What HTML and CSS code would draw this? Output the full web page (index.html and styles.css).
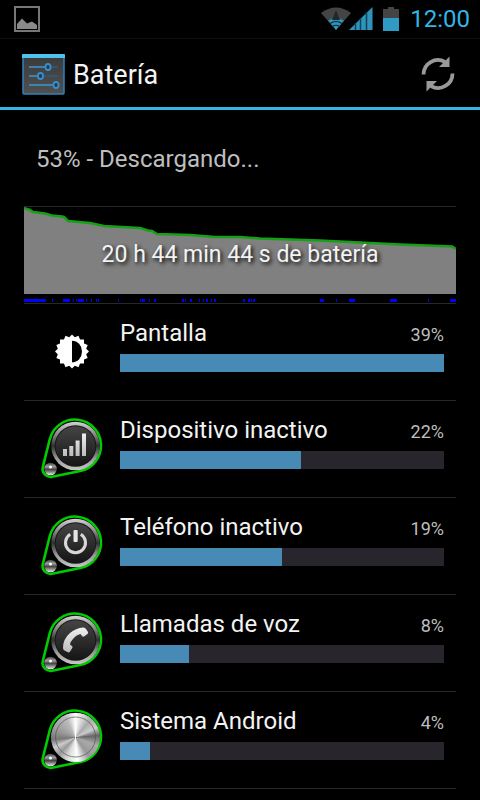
FILE: index.html
```html
<!DOCTYPE html>
<html lang="es">
<head>
    <meta charset="UTF-8">
    <meta name="viewport" content="width=device-width, initial-scale=1.0">
    <title>Batería</title>
    <link rel="stylesheet" href="styles.css">
</head>
<body>
    <!-- Formas compartidas por los iconos -->
    <svg class="defs" width="0" height="0" aria-hidden="true">
        <defs>
            <linearGradient id="ring" x1="0" y1="0" x2="0" y2="1">
                <stop offset="0" stop-color="#d2d2d2"/>
                <stop offset="0.25" stop-color="#8c8c8c"/>
                <stop offset="0.5" stop-color="#303030"/>
                <stop offset="0.75" stop-color="#999"/>
                <stop offset="1" stop-color="#c8c8c8"/>
            </linearGradient>
            <linearGradient id="disc" x1="0" y1="0" x2="0" y2="1">
                <stop offset="0" stop-color="#454545"/>
                <stop offset="1" stop-color="#151515"/>
            </linearGradient>
            <linearGradient id="ball" x1="0" y1="0" x2="0" y2="1">
                <stop offset="0" stop-color="#444"/>
                <stop offset="0.3" stop-color="#999"/>
                <stop offset="0.55" stop-color="#444"/>
                <stop offset="1" stop-color="#eee"/>
            </linearGradient>
            <linearGradient id="glyph" x1="0" y1="0" x2="0" y2="1">
                <stop offset="0" stop-color="#f0f0f0"/>
                <stop offset="1" stop-color="#bbb"/>
            </linearGradient>
            <linearGradient id="panel" x1="0" y1="0" x2="0" y2="1">
                <stop offset="0" stop-color="#3a3a3a"/>
                <stop offset="1" stop-color="#505050"/>
            </linearGradient>
            <symbol id="badge" viewBox="0 0 72 72">
                <path d="M6.8 55L13.8 27.1A26 26 0 1 1 44.3 59L16.1 64.8A8 8 0 0 1 6.8 55Z" fill="#000" stroke="#0c0" stroke-width="2.6"/>
                <circle cx="39.5" cy="34" r="24.3" fill="url(#ring)"/>
                <circle cx="39.5" cy="34" r="20.8" fill="#181818"/>
                <circle cx="39.5" cy="34" r="19.8" fill="url(#disc)"/>
                <circle cx="14.5" cy="57" r="6.3" fill="url(#ball)"/>
                <circle cx="14.5" cy="55" r="1.5" fill="#fff"/>
            </symbol>
        </defs>
    </svg>

    <div class="status-bar">
        <svg class="status-picture" width="26" height="26" viewBox="0 0 26 26" aria-hidden="true">
            <rect x="1" y="1" width="24" height="24" fill="none" stroke="#777" stroke-width="2"/>
            <path d="M3 23V18L8 12.5L13 17.5L18 15.5L23 19V23Z" fill="#8a8a8a"/>
        </svg>
        <div class="status-icons">
            <svg width="52" height="24" viewBox="0 0 52 24" aria-hidden="true">
                <path d="M0 6Q15 -5 30 6L15 23Z" fill="#444"/>
                <path d="M7 13.5Q15 8.500 23 13.5L15 23Z" fill="#2f93bb"/>
                <path d="M15 3L11 13H19Z" fill="#1c2a30"/>
                <path d="M9 16.5Q15 12.5 21 16.5M11.5 19.5Q15 17 18.5 19.5" fill="none" stroke="#123" stroke-width="1.2"/>
                <path d="M28 23L51.5 0V23Z" fill="#2f93bb"/>
                <path d="M34.5 16V23M39.5 11V23M45.5 5V23" stroke="#0e4257" stroke-width="1.5"/>
            </svg>
            <svg class="status-battery" width="16" height="24" viewBox="0 0 16 24" aria-hidden="true">
                <path d="M5 0H11V2H16V11H0V2H5Z" fill="#444"/>
                <rect y="11" width="16" height="13" fill="#2f9ac4"/>
            </svg>
            <span class="clock">12:00</span>
        </div>
    </div>

    <header class="action-bar">
        <svg width="44" height="44" viewBox="0 0 44 44" aria-hidden="true">
            <rect x="2" y="3" width="41" height="39" rx="1" fill="url(#panel)" stroke="#2d83c0" stroke-width="1.5"/>
            <path d="M1 3Q1 2 2 2H43Q44 2 44 3V6H1Z" fill="#4fc1ee"/>
            <path d="M8 15H24M8 24H17M8 33H32" stroke="#3a97dd" stroke-width="1.5"/>
            <path d="M30 15H37M23 24H37" stroke="#30597c" stroke-width="1.5"/>
            <g fill="#303840" stroke="#3190cf" stroke-width="1.8">
                <ellipse cx="27" cy="15" rx="2.6" ry="3"/>
                <ellipse cx="19.5" cy="24" rx="2.6" ry="3"/>
                <ellipse cx="35" cy="33" rx="2.6" ry="3"/>
            </g>
        </svg>
        <h1 class="title">Batería</h1>
        <button class="refresh" type="button" aria-label="Actualizar">
            <svg width="34" height="36" viewBox="0 0 34 36" aria-hidden="true">
                <g id="arrow">
                    <path d="M2.5 18.5A14.5 14.5 0 0 1 24 5.8" fill="none" stroke="#999" stroke-width="3.8"/>
                    <path d="M28.5 .5V11H18Z" fill="#999"/>
                </g>
                <use href="#arrow" transform="rotate(180 17 18)"/>
            </svg>
        </button>
    </header>

    <main class="content">
        <p class="summary">53% - Descargando...</p>

        <div class="history">
            <svg class="history-chart" viewBox="0 0 432 96" preserveAspectRatio="none" aria-hidden="true">
                <path d="M0 1L6 3L9 5L21 6.5L28 8.5L38 9.5L40 10L44 14L66 16L80 19L116 21L124 23.5L128 24L133 27L166 28L191 30L216 30L236 31.5L296 33.5L336 35.5L376 37.5L416 39L428 39.5L432 42V87H0Z" fill="#808080"/>
                <path d="M0 1L6 3L9 5L21 6.5L28 8.5L38 9.5L40 10L44 14L66 16L80 19L116 21L124 23.5L128 24L133 27L166 28L191 30L216 30L236 31.5L296 33.5L336 35.5L376 37.5L416 39L428 39.5L432 42" fill="none" stroke="#16a016" stroke-width="2.5"/>
                <!-- Momentos con la pantalla encendida -->
                <path d="M0 92h22v3H0zM28 92h1v3h-1zM39 92h7v3h-7zM49 92h1v3h-1zM52 92h1v3h-1zM54 92h6v3h-6zM62 92h1v3h-1zM67 92h1v3h-1zM72 92h1v3h-1zM74 92h1v3h-1zM94 92h1v3h-1zM116 92h1v3h-1zM118 92h3v3h-3zM125 92h1v3h-1zM130 92h2v3h-2zM158 92h2v3h-2zM161 92h1v3h-1zM166 92h2v3h-2zM175 92h1v3h-1zM179 92h1v3h-1zM182 92h2v3h-2zM187 92h1v3h-1zM190 92h2v3h-2zM219 92h2v3h-2zM224 92h2v3h-2zM227 92h1v3h-1zM229 92h2v3h-2zM296 92h4v3h-4zM312 92h1v3h-1zM325 92h6v3h-6zM366 92h7v3h-7zM404 92h1v3h-1zM426 92h6v3h-6z" fill="#00f" shape-rendering="crispEdges"/>
            </svg>
            <span class="history-label">20 h 44 min 44 s de batería</span>
        </div>

        <ul class="usage">
            <li class="row">
                <svg class="icon" viewBox="0 0 72 72" aria-hidden="true">
                    <!-- Cuatro cuadrados girados forman las 16 puntas -->
                    <g fill="#fff">
                        <rect x="24" y="24.5" width="24" height="24"/>
                        <rect x="24" y="24.5" width="24" height="24" transform="rotate(22.5 36 36.5)"/>
                        <rect x="24" y="24.5" width="24" height="24" transform="rotate(45 36 36.5)"/>
                        <rect x="24" y="24.5" width="24" height="24" transform="rotate(67.5 36 36.5)"/>
                    </g>
                    <path d="M36 25.7A10 10.8 0 0 1 36 47.3Z" fill="#000"/>
                </svg>
                <div class="detail">
                    <div class="heading"><span class="name">Pantalla</span><span class="percent">39%</span></div>
                    <div class="track"><div class="fill" style="width: 100%"></div></div>
                </div>
            </li>
            <li class="row">
                <svg class="icon" viewBox="0 0 72 72" aria-hidden="true">
                    <use href="#badge"/>
                    <path d="M27 37h4v7h-4zM33.3 34h4v10h-4zM39.6 28.5h4V44h-4zM46 21.5h4V44h-4z" fill="url(#glyph)"/>
                </svg>
                <div class="detail">
                    <div class="heading"><span class="name">Dispositivo inactivo</span><span class="percent">22%</span></div>
                    <div class="track"><div class="fill" style="width: 56%"></div></div>
                </div>
            </li>
            <li class="row">
                <svg class="icon" viewBox="0 0 72 72" aria-hidden="true">
                    <use href="#badge"/>
                    <path d="M34.2 25.2A10 10 0 1 0 44.8 25.2" fill="none" stroke="#d8d8d8" stroke-width="3"/>
                    <rect x="37.5" y="21" width="4.2" height="12" rx="1" fill="#e4e4e4"/>
                </svg>
                <div class="detail">
                    <div class="heading"><span class="name">Teléfono inactivo</span><span class="percent">19%</span></div>
                    <div class="track"><div class="fill" style="width: 50%"></div></div>
                </div>
            </li>
            <li class="row">
                <svg class="icon" viewBox="0 0 72 72" aria-hidden="true">
                    <use href="#badge"/>
                    <path d="M27 42Q27 33 34 27Q40 22 47 21.5Q49 21.3 50 23L52 26Q52.5 27 51.5 28L48 30.5Q47 31 46 30L44.5 28Q40 29 37 33Q34 36 34 38.5L36 40Q37 40.8 36.3 42L34 45.5Q33 47 31.5 46L28.5 44.5Q27 43.5 27 42Z" fill="url(#glyph)"/>
                </svg>
                <div class="detail">
                    <div class="heading"><span class="name">Llamadas de voz</span><span class="percent">8%</span></div>
                    <div class="track"><div class="fill" style="width: 21.3%"></div></div>
                </div>
            </li>
            <li class="row">
                <svg class="icon" viewBox="0 0 72 72" aria-hidden="true">
                    <use href="#badge"/>
                    <foreignObject x="15" y="10" width="49" height="49"><div class="metal"></div></foreignObject>
                    <circle cx="39.5" cy="34" r="20" fill="none" stroke="#555" stroke-width="1" stroke-opacity="0.7"/>
                </svg>
                <div class="detail">
                    <div class="heading"><span class="name">Sistema Android</span><span class="percent">4%</span></div>
                    <div class="track"><div class="fill" style="width: 9.3%"></div></div>
                </div>
            </li>
        </ul>
    </main>
</body>
</html>
```
FILE: styles.css
```css
body {
    font-family: Roboto, sans-serif;
    background-color: #000;
    color: #f3f3f3;
    margin: 0;
}
.defs {
    position: absolute;
}
.status-bar {
    display: flex;
    justify-content: space-between;
    align-items: center;
    height: 38px;
    padding: 0 10px 0 14px;
    border-bottom: 1px solid #0d0d0d;
}
.status-icons {
    display: flex;
    align-items: center;
}
.status-battery {
    margin: 0 11px 0 10px;
}
.clock {
    font-size: 24px;
    line-height: 40px;
    color: #33b5e5;
}
.action-bar {
    display: flex;
    align-items: center;
    height: 66px;
    padding: 2px 25px 0 21px;
    border-bottom: 3px solid #33b5e5;
}
.title {
    flex: 1;
    margin: 0 0 0 8px;
    padding-top: 2px;
    font-size: 27px;
    font-weight: 400;
}
.refresh {
    display: flex;
    padding: 0;
    border: none;
    background: none;
    cursor: pointer;
}
.content {
    padding: 0 24px;
}
.summary {
    margin: 0;
    padding: 2px 12px 0;
    font-size: 24px;
    line-height: 94px;
    color: #bebebe;
    border-bottom: 1px solid #282828;
}
.history {
    position: relative;
    height: 96px;
    border-bottom: 1px solid #282828;
}
.history-chart {
    display: block;
    width: 100%;
    height: 96px;
}
/* El texto va centrado encima de la gráfica */
.history-label {
    position: absolute;
    inset: 0;
    font-size: 23px;
    line-height: 96px;
    text-align: center;
    text-shadow: 2px 2px 4px #000;
}
.usage {
    list-style: none;
    margin: 0;
    padding: 0;
}
.row {
    display: flex;
    align-items: center;
    height: 96px;
    padding: 0 12px;
    border-bottom: 1px solid #282828;
}
.icon {
    flex: none;
    width: 72px;
    height: 72px;
    margin: 0 12px 2px 0;
}
.detail {
    flex: 1;
}
.heading {
    display: flex;
    justify-content: space-between;
    align-items: baseline;
    margin-bottom: 3px;
    line-height: 32px;
}
.name {
    font-size: 24px;
}
.percent {
    font-size: 18px;
    color: #bebebe;
}
.track {
    height: 18px;
    margin-bottom: 15px;
    background-color: #28262c;
}
.fill {
    height: 100%;
    background-color: #468ab5;
}
.metal {
    width: 49px;
    height: 49px;
    border-radius: 50%;
    background: conic-gradient(#fff, #aaa 40deg, #ccc 65deg, #666 85deg, #aaa 110deg, #999 145deg, #fff 175deg, #ddd 200deg, #999 225deg, #ccc 245deg, #777 265deg, #999 290deg, #bbb 335deg, #fff);
}
```
